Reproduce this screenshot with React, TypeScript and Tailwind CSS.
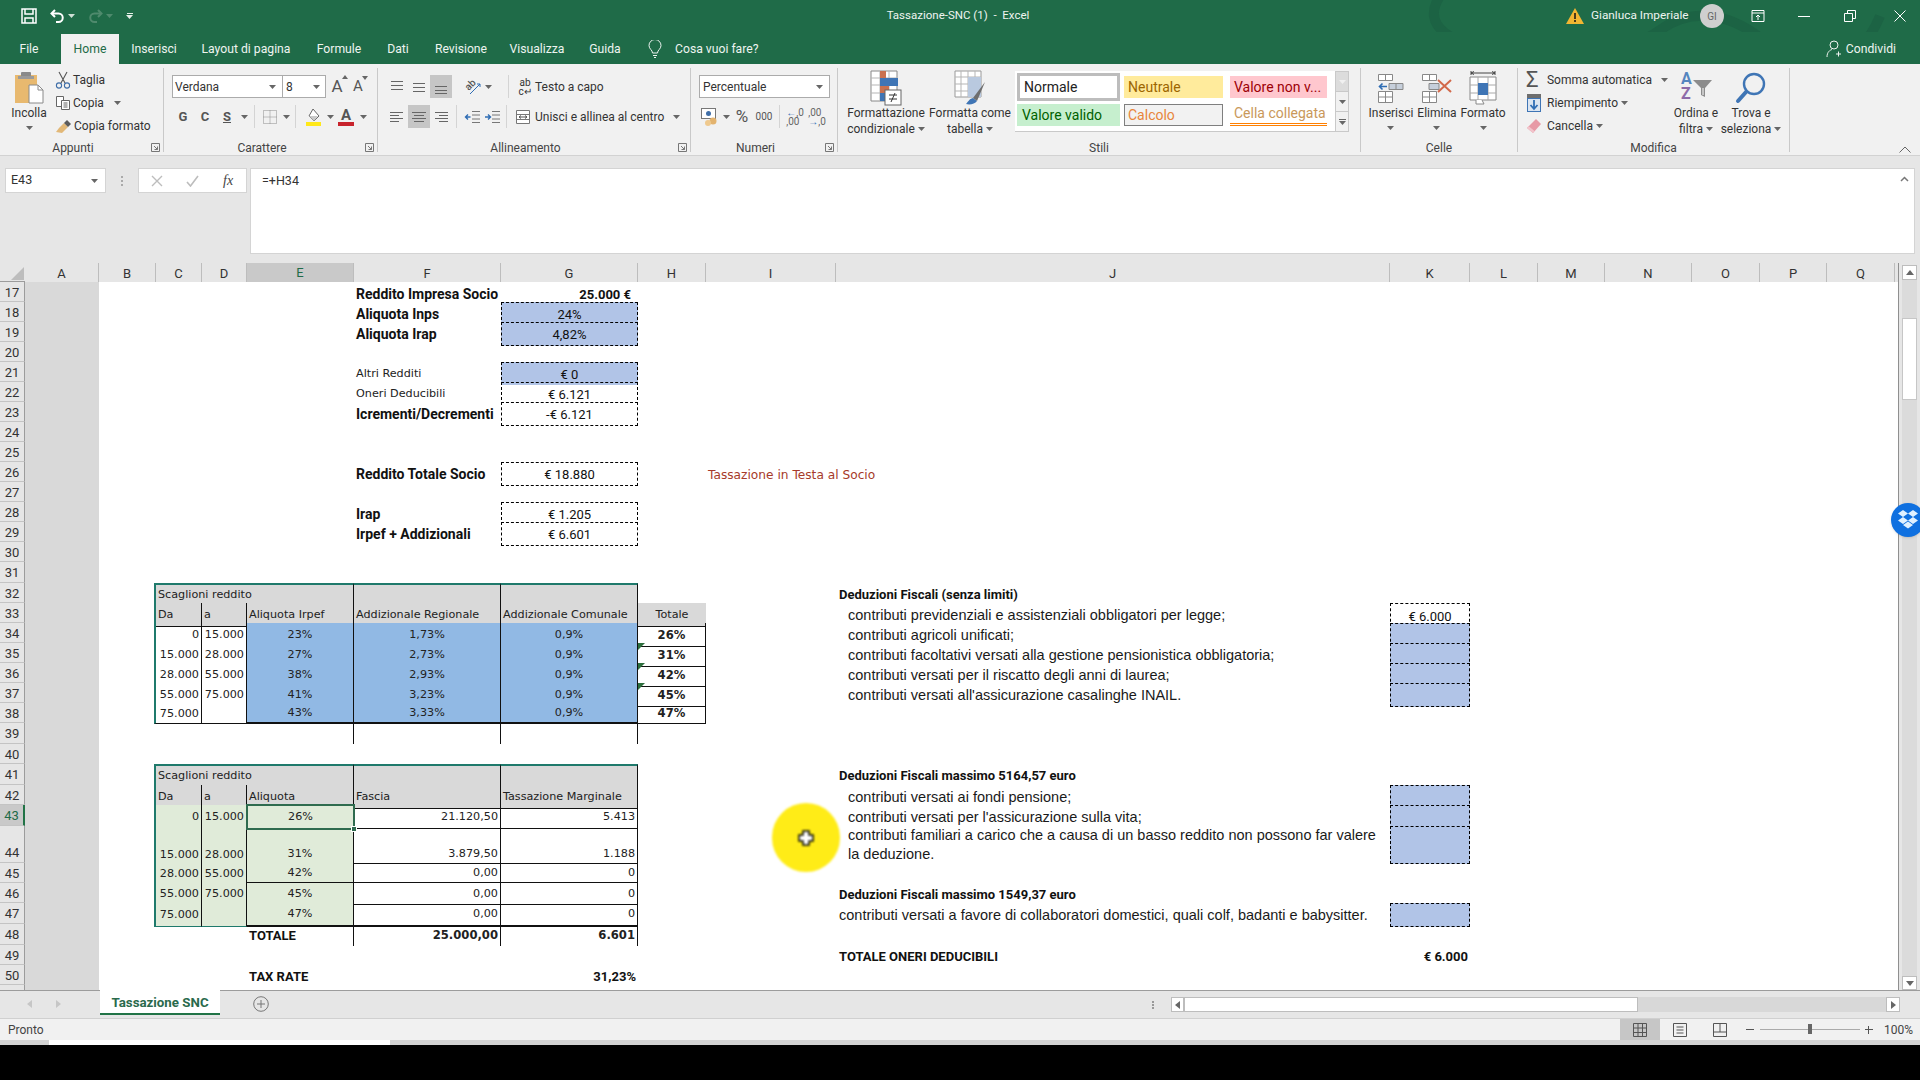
import React from "react";

const UI = 'font-["Roboto",sans-serif]';
const CAL = 'font-["Roboto",sans-serif] text-[13px] text-[#111]';
const CALB = 'font-["Roboto",sans-serif] text-[13px] font-bold text-[#111]';
const CALL = 'font-["Roboto",sans-serif] text-[14px] font-bold text-[#111]';
const VD = 'font-["DejaVu_Sans",sans-serif] text-[11.2px] text-[#222]';
const VDB = 'font-["DejaVu_Sans",sans-serif] text-[11.6px] font-bold text-[#222]';
const AR = 'font-["Liberation_Sans",sans-serif] text-[14.5px] text-[#1a1a1a]';

const COLS =
  "grid-cols-[74px_57px_46px_45px_107px_147px_137px_68px_130px_554px_80px_68px_67px_87px_68px_67px_68px_3px]";

const Caret = ({ c = "#666" }: { c?: string }) => (
  <svg width="7" height="4" viewBox="0 0 7 4">
    <path d="M0 0h7L3.5 4z" fill={c} />
  </svg>
);

const Lines = ({ rows }: { rows: [number, number, number][] }) => (
  <svg width="16" height="16" viewBox="0 0 16 16" stroke="#666" strokeWidth="1">
    {rows.map(([y, a, b]) => (
      <path key={y} d={`M${a} ${y}.5H${b}`} />
    ))}
  </svg>
);

const SaveIcon = () => (
  <svg width="16" height="16" viewBox="0 0 16 16" fill="none" stroke="#fff" strokeWidth="1.5">
    <path d="M1 1h14v14H1z" />
    <path d="M4 1v5h8V1M4 15v-5h8v5" />
  </svg>
);

const UndoIcon = ({ c }: { c: string }) => (
  <svg width="15" height="15" viewBox="0 0 15 15" fill="none" stroke={c} strokeWidth="2">
    <path d="M5 1 1.5 4.5 5 8" />
    <path d="M2 4.5h6.5a4 4 0 0 1 0 8.5H6" />
  </svg>
);

const PasteIcon = () => (
  <svg width="30" height="34" viewBox="0 0 30 34">
    <rect x="1" y="4" width="22" height="28" fill="#e8b96f" />
    <rect x="7" y="1" width="10" height="6" rx="1" fill="#8a8a8a" />
    <rect x="4" y="5" width="16" height="3" fill="#9a9a9a" />
    <path d="M15 14h9l5 5v13H15z" fill="#fff" stroke="#8a8a8a" />
    <path d="M24 14v5h5" fill="none" stroke="#8a8a8a" />
  </svg>
);

const ScissorsIcon = () => (
  <svg width="16" height="18" viewBox="0 0 16 18" fill="none" stroke="#555" strokeWidth="1.1">
    <path d="M4 1l6 11M12 1 6 12" />
    <circle cx="4" cy="14.5" r="2.6" stroke="#3f6ea8" />
    <circle cx="12" cy="14.5" r="2.6" stroke="#3f6ea8" />
  </svg>
);

const CopyIcon = () => (
  <svg width="16" height="16" viewBox="0 0 16 16" fill="#fff" stroke="#666">
    <path d="M1.5 1.5h7v10h-7z" />
    <path d="M6.5 5.5h8v9h-8z" />
    <path d="M8.5 8h4M8.5 10h4M8.5 12h4" />
  </svg>
);

const BrushIcon = () => (
  <svg width="18" height="16" viewBox="0 0 18 16">
    <path d="M9 5 13 9 7 15 1 14 4 10z" fill="#e2b877" />
    <path d="M9 5l3-3 4 4-3 3z" fill="#5a5a5a" />
  </svg>
);

const FontA = ({ up }: { up: boolean }) => (
  <span className={`${UI} relative text-[#555] ${up ? "text-[17px]" : "text-[15px]"} leading-none`}>
    A
    <svg className="absolute -top-[3px] -right-[5px]" width="6" height="4" viewBox="0 0 6 4">
      <path d={up ? "M0 4h6L3 0z" : "M0 0h6L3 4z"} fill="#666" />
    </svg>
  </span>
);

const BorderIcon = () => (
  <svg width="16" height="16" viewBox="0 0 16 16" fill="none" stroke="#8c8c8c" strokeDasharray="1 1">
    <path d="M1.5 1.5h13v13h-13zM8 1.5v13M1.5 8h13" />
  </svg>
);

const FillIcon = () => (
  <svg width="18" height="18" viewBox="0 0 18 18">
    <path d="M8 1l6 7-5 5-5-5z" fill="#fff" stroke="#666" />
    <path d="M4 8h9l-4 5z" fill="#c9c9c9" />
    <rect x="1" y="14" width="15" height="4" fill="#ffe81a" />
  </svg>
);

const ColorIcon = () => (
  <div className="flex flex-col items-center">
    <span className={`${UI} text-[15px] font-bold leading-[14px] text-[#555]`}>A</span>
    <span className="h-[4px] w-[16px] bg-[#c8232c]" />
  </div>
);

const Orient = () => (
  <div className="relative h-[18px] w-[18px]">
    <span className={`${UI} absolute left-[1px] top-[1px] -rotate-45 text-[10px] font-medium leading-[12px] text-[#555]`}>ab</span>
    <svg className="absolute left-0 top-0" width="18" height="18" viewBox="0 0 18 18" fill="none" stroke="#2f6db4">
      <path d="M6 16 16 6M16 6h-3M16 6v3" />
    </svg>
  </div>
);

const Indent = ({ right }: { right: boolean }) => (
  <svg width="16" height="14" viewBox="0 0 16 14" fill="none" stroke="#777">
    <path d="M8 1.5h8M8 5h8M8 9h8M8 12.5h8" />
    <path d={right ? "M1 7h5M4 4.5 6.5 7 4 9.5" : "M6.5 7h-5M4 4.5 1.5 7 4 9.5"} stroke="#2f6db4" strokeWidth="1.4" />
  </svg>
);

const MergeIcon = () => (
  <svg width="16" height="16" viewBox="0 0 16 16" fill="#fff" stroke="#777">
    <path d="M1.5 1.5h13v13h-13zM1.5 5.5h13M1.5 10.5h13" />
    <path d="M4 8h8M4 8l2-1.5M4 8l2 1.5M12 8l-2-1.5M12 8l-2 1.5" stroke="#555" />
  </svg>
);

const MoneyIcon = () => (
  <svg width="18" height="18" viewBox="0 0 18 18">
    <rect x="0.5" y="0.5" width="14" height="10" fill="#fff" stroke="#777" />
    <circle cx="7.5" cy="5.5" r="2.5" fill="#3f6ea8" />
    <circle cx="12" cy="13" r="3.5" fill="#e3b36e" />
    <circle cx="7" cy="15" r="3" fill="#efc98e" />
  </svg>
);

const CondIcon = () => (
  <svg width="32" height="36" viewBox="0 0 32 36">
    <path d="M1 1h26v30H1z" fill="#fff" stroke="#888" />
    <path d="M10 1v30M19 1v30M1 8h26M1 15h26M1 23h26" stroke="#b5b5b5" fill="none" />
    <rect x="10" y="1" width="6" height="7" fill="#c9714f" />
    <rect x="10" y="8" width="18" height="8" fill="#3f75b5" />
    <rect x="10" y="16" width="9" height="7" fill="#c9714f" />
    <rect x="10" y="23" width="5" height="8" fill="#3f75b5" />
    <rect x="15" y="20" width="16" height="15" fill="#fff" stroke="#666" />
    <path d="M19 25h8M19 29h8M25 23l-4 9" stroke="#333" fill="none" />
  </svg>
);

const TableIcon = () => (
  <svg width="32" height="36" viewBox="0 0 32 36">
    <path d="M1 1h26v26H1z" fill="#fff" stroke="#999" />
    <path d="M7 1v26M14 1v26M21 1v26M1 7h26M1 14h26M1 21h26" stroke="#b5b5b5" fill="none" />
    <rect x="14" y="7" width="13" height="20" fill="#b9c9df" />
    <path d="M31 12 19 28l4 3z" fill="#6e6e6e" />
    <path d="M19 28c-4 1-5 4-7 6 4 1 9 0 11-3z" fill="#3f75b5" />
  </svg>
);

const InsertIcon = () => (
  <svg width="28" height="30" viewBox="0 0 28 30" fill="#fff" stroke="#888">
    <path d="M1.5 1.5h14v6h-14zM8.5 1.5v6M1.5 18.5h14v11h-14zM8.5 18.5v11M1.5 24h14" />
    <path d="M12 10.5h14v6H12zM19 10.5v6" fill="#c6cfdb" />
    <path d="M10 13.5H3M5.5 10.5l-3 3 3 3" stroke="#2f6db4" strokeWidth="1.6" fill="none" />
  </svg>
);

const DeleteIcon = () => (
  <svg width="32" height="30" viewBox="0 0 32 30" fill="#fff" stroke="#888">
    <path d="M1.5 1.5h14v6h-14zM8.5 1.5v6M1.5 18.5h14v11h-14zM8.5 18.5v11M1.5 24h14" />
    <path d="M8 10.5h10v6H8z" fill="#c6cfdb" />
    <path d="M17 7l13 12M30 7 17 19" stroke="#d2694a" strokeWidth="2" />
  </svg>
);

const FormatIcon = () => (
  <svg width="30" height="34" viewBox="0 0 30 34" fill="none" stroke="#888">
    <path d="M2 6h26v23H2z" fill="#fff" />
    <path d="M10 6v23M20 6v23M2 14h26M2 22h26" stroke="#aaa" />
    <rect x="10" y="12" width="10" height="12" fill="#3f75b5" stroke="none" />
    <path d="M3 2h24M3 0v4M27 0v4M3 2l3-1.5M3 2l3 1.5M27 2l-3-1.5M27 2l-3 1.5" stroke="#444" />
    <path d="M8 29v4h8l-2-4" fill="#fff" />
  </svg>
);

const FillDown = () => (
  <svg width="16" height="20" viewBox="0 0 16 20">
    <rect x="1" y="1" width="14" height="4" fill="#6e6e6e" />
    <rect x="1.5" y="5.5" width="13" height="13" fill="#dbe5f1" stroke="#3f75b5" />
    <path d="M8 7v9M4.5 12 8 16l3.500-4" fill="none" stroke="#2f6db4" strokeWidth="1.8" />
  </svg>
);

const Eraser = () => (
  <svg width="16" height="16" viewBox="0 0 16 16">
    <path d="M10 1l5 5-8 9-6-5z" fill="#e79aa6" />
    <path d="M1 10l6 5 1.500-2-6-5z" fill="#f2c4cb" />
  </svg>
);

const SortIcon = () => (
  <div className="relative h-[32px] w-[34px]">
    <span className={`${UI} absolute left-[2px] -top-[1px] text-[16px] font-bold leading-[16px] text-[#5585bf]`}>A</span>
    <span className={`${UI} absolute left-[2px] top-[14px] text-[16px] font-bold leading-[16px] text-[#8e6aa8]`}>Z</span>
    <svg className="absolute left-[14px] top-[7px]" width="20" height="20" viewBox="0 0 20 20">
      <path d="M0 1h19l-7 8v9l-4-2V9z" fill="#8c8c8c" />
      <path d="M10 9v7" stroke="#fff" />
    </svg>
  </div>
);

const Magnifier = () => (
  <svg width="32" height="34" viewBox="0 0 32 34" fill="none">
    <circle cx="19" cy="13" r="10" stroke="#3f75b5" strokeWidth="2.4" />
    <path d="M11 21 3 30" stroke="#3f75b5" strokeWidth="4" strokeLinecap="round" />
  </svg>
);

function BigBtn({ w, icon, lines, arrow }: { w: string; icon: React.ReactNode; lines: string[]; arrow?: boolean }) {
  return (
    <div className={`${w} flex flex-col items-center pt-[4px]`}>
      <div className="flex h-[32px] items-center justify-center">{icon}</div>
      <div className="mt-[1px] flex flex-col items-center whitespace-nowrap leading-[16px]">
        {lines.map((l, i) => (
          <span key={l} className="flex items-center gap-[3px]">
            {l}
            {arrow && lines.length > 1 && i === lines.length - 1 && <Caret />}
          </span>
        ))}
        {arrow && lines.length === 1 && (
          <span className="flex h-[14px] items-center">
            <Caret />
          </span>
        )}
      </div>
    </div>
  );
}

function Group({ w, label, launcher, children }: { w: string; label: string; launcher?: boolean; children: React.ReactNode }) {
  return (
    <div className={`${w} relative flex h-[84px] shrink-0 flex-col border-r border-[#c9c9c9]`}>
      <div className="flex h-[73px] shrink-0">{children}</div>
      <div className={`h-[11px] text-center text-[12px] leading-[14px] text-[#444] ${launcher ? "pr-[17px]" : ""}`}>{label}</div>
      {launcher && (
        <svg className="absolute right-[3px] top-[75px]" width="9" height="9" viewBox="0 0 9 9" fill="none" stroke="#777">
          <path d="M.5.5h8v8h-8zM3 3l3.500 3.500M3.500 6.500H6.500V3.500" />
        </svg>
      )}
    </div>
  );
}

const Slot = ({ w = "w-[22px]", active, children }: { w?: string; active?: boolean; children: React.ReactNode }) => (
  <div className={`${w} flex h-[23px] shrink-0 items-center justify-center ${active ? "bg-[#c6c6c6]" : ""}`}>{children}</div>
);

const Sep = () => <div className="mx-[4px] h-[23px] w-px shrink-0 bg-[#d4d4d4]" />;

function TitleBar() {
  return (
    <div className="relative flex h-[32px] items-center bg-[#1f6b48] text-[#eef4f0]">
      <svg className="absolute right-0 top-0" width="520" height="64" viewBox="0 0 520 64" fill="none" stroke="#1c6344" strokeWidth="10">
        <path d="M40 -4c-20 30 10 50 70 56s120 0 150-22 70-20 110 16 90 20 110-30" />
      </svg>
      <div className="relative flex w-[351px] items-center">
        <div className="ml-[21px] w-[16px]">
          <SaveIcon />
        </div>
        <div className="ml-[13px] flex items-center gap-[3px]">
          <UndoIcon c="#ffffff" />
          <Caret c="#cfe0d6" />
        </div>
        <div className="ml-[13px] flex items-center gap-[3px]">
          <UndoIconFlip />
          <Caret c="#4f8a6d" />
        </div>
        <div className="ml-[13px] flex flex-col items-center gap-[1px]">
          <span className="h-px w-[6px] bg-[#e6efe9]" />
          <Caret c="#e6efe9" />
        </div>
      </div>
      <div className={`${UI} relative flex-1 whitespace-pre text-center text-[11.5px]`}>Tassazione-SNC (1)  -  Excel</div>
      <div className={`${UI} relative flex w-[355px] items-center text-[11.8px]`}>
        <svg className="ml-[1px]" width="18" height="16" viewBox="0 0 18 16">
          <path d="M9 0l9 16H0z" fill="#f2b632" />
          <path d="M8 5h2v6H8zM8 12h2v2H8z" fill="#4a3b1a" />
        </svg>
        <span className="ml-[7px] w-[109px] whitespace-nowrap">Gianluca Imperiale</span>
        <span className="flex h-[24px] w-[24px] items-center justify-center rounded-full bg-[#cfcfcf] text-[10px] text-[#666]">GI</span>
        <svg className="ml-[24px]" width="20" height="14" viewBox="0 0 20 14" fill="none" stroke="#fff">
          <path d="M4 1.500h12v11H4zM4 4h12M10 11V6M8 8l2-2 2 2" />
        </svg>
        <span className="ml-[30px] h-px w-[12px] bg-white" />
        <svg className="ml-[34px]" width="12" height="12" viewBox="0 0 12 12" fill="none" stroke="#fff">
          <path d="M.5 3.500h8v8h-8zM3.500 3V.5h8v8H9" />
        </svg>
        <svg className="ml-[38px]" width="12" height="12" viewBox="0 0 12 12" stroke="#fff">
          <path d="M.5.5l11 11M11.500.5l-11 11" />
        </svg>
      </div>
    </div>
  );
}

const UndoIconFlip = () => (
  <svg width="15" height="15" viewBox="0 0 15 15" fill="none" stroke="#4f8a6d" strokeWidth="2">
    <path d="M10 1l3.500 3.500L10 8" />
    <path d="M13 4.500H6.500a4 4 0 0 0 0 8.500H9" />
  </svg>
);

function TabBar() {
  const tabs: [string, string][] = [
    ["File", "w-[61px] pr-[3px]"],
    ["Home", "w-[58px]"],
    ["Inserisci", "w-[70px]"],
    ["Layout di pagina", "w-[114px]"],
    ["Formule", "w-[72px]"],
    ["Dati", "w-[46px]"],
    ["Revisione", "w-[80px]"],
    ["Visualizza", "w-[72px]"],
    ["Guida", "w-[64px]"],
  ];
  return (
    <div className={`${UI} relative flex h-[32px] items-end bg-[#1f6b48] text-[12.2px] text-[#eef4f0]`}>
      {tabs.map(([t, w]) => (
        <div
          key={t}
          className={`${w} flex h-[30px] items-center justify-center ${t === "Home" ? "bg-[#f1f1f1] text-[#1f6b48]" : ""}`}
        >
          {t}
        </div>
      ))}
      <div className="flex h-[30px] items-center">
        <svg className="ml-[11px]" width="14" height="18" viewBox="0 0 14 18" fill="none" stroke="#eef4f0">
          <path d="M4.500 13c0-3-3.500-4-3.500-7.500a6 6 0 0 1 12 0C13 9 9.500 10 9.500 13zM5 15.500h4M6 17.500h2" />
        </svg>
        <span className="ml-[13px]">Cosa vuoi fare?</span>
      </div>
      <div className="ml-auto mr-[24px] flex h-[30px] items-center gap-[4px]">
        <svg width="16" height="18" viewBox="0 0 16 18" fill="none" stroke="#eef4f0">
          <circle cx="8" cy="5" r="4" />
          <path d="M1 17c0-5 3-7 5-7.500M9 10v0M10 14h5M12.500 11.500v5" />
        </svg>
        <span>Condividi</span>
      </div>
    </div>
  );
}

function Ribbon() {
  return (
    <div className={`${UI} flex h-[92px] border-b border-[#d2d2d2] bg-[#f1f1f1] pt-[4px] text-[12px] text-[#333]`}>
      <Group w="w-[164px]" label="Appunti" launcher>
        <div className="flex w-[55px] flex-col items-center pl-[3px] pt-[3px]">
          <PasteIcon />
          <span className="mt-[1px] leading-[14px]">Incolla</span>
          <span className="mt-[6px]">
            <Caret />
          </span>
        </div>
        <div className="flex flex-col">
          <div className="flex h-[23px] items-center gap-[2px]"><ScissorsIcon /> Taglia</div>
          <div className="flex h-[23px] items-center gap-[2px]"><CopyIcon /> Copia <span className="ml-[8px]"><Caret /></span></div>
          <div className="flex h-[23px] items-center whitespace-nowrap gap-[1px]"><BrushIcon /> Copia formato</div>
        </div>
      </Group>

      <Group w="w-[214px]" label="Carattere" launcher>
        <div className="flex flex-col pl-[8px] pt-[7px]">
          <div className="flex h-[23px] items-center">
            <div className="flex h-[23px] w-[111px] items-center justify-between border border-[#ababab] bg-white pl-[2px] pr-[6px] text-[#333]">
              Verdana <Caret />
            </div>
            <div className="-ml-px flex h-[23px] w-[44px] items-center justify-between border border-[#ababab] bg-white pl-[3px] pr-[5px]">
              8 <Caret />
            </div>
            <Slot><FontA up /></Slot>
            <Slot w="w-[20px]"><FontA up={false} /></Slot>
          </div>
          <div className="mt-[7px] flex h-[23px] items-center text-[#555]">
            <Slot><span className="text-[13px] font-bold">G</span></Slot>
            <Slot><span className="text-[13px] font-bold">C</span></Slot>
            <Slot><span className="text-[13px] font-bold underline">S</span></Slot>
            <Slot w="w-[12px]"><Caret /></Slot>
            <Sep />
            <Slot><BorderIcon /></Slot>
            <Slot w="w-[10px]"><Caret /></Slot>
            <Sep />
            <div className="w-[3px]" />
            <Slot><FillIcon /></Slot>
            <Slot w="w-[10px]"><Caret /></Slot>
            <Slot><ColorIcon /></Slot>
            <Slot w="w-[12px]"><Caret /></Slot>
          </div>
        </div>
      </Group>

      <Group w="w-[313px]" label="Allineamento" launcher>
        <div className="flex flex-col pl-[8px] pt-[7px]">
          <div className="flex h-[23px] items-center">
            <Slot><Lines rows={[[2, 2, 14], [6, 2, 14], [10, 2, 14]]} /></Slot>
            <Slot><Lines rows={[[4, 2, 14], [8, 2, 14], [12, 2, 14]]} /></Slot>
            <Slot active><Lines rows={[[7, 2, 14], [11, 2, 14], [14, 2, 14]]} /></Slot>
            <div className="w-[10px]" />
            <Slot><Orient /></Slot>
            <Slot w="w-[8px]"><Caret /></Slot>
            <div className="w-[12px]" />
            <Sep />
            <div className="ml-[2px] flex h-[23px] w-[20px] flex-col items-center justify-center text-[10px] leading-[9px]">
              <span>ab</span>
              <span>c↵</span>
            </div>
            <span className="whitespace-nowrap">Testo a capo</span>
          </div>
          <div className="mt-[7px] flex h-[23px] items-center">
            <Slot><Lines rows={[[3, 1, 14], [6, 1, 10], [9, 1, 14], [12, 1, 10]]} /></Slot>
            <Slot active><Lines rows={[[3, 1, 15], [6, 3, 13], [9, 1, 15], [12, 3, 13]]} /></Slot>
            <Slot><Lines rows={[[3, 2, 15], [6, 6, 15], [9, 2, 15], [12, 6, 15]]} /></Slot>
            <Sep />
            <div className="w-[1px]" />
            <Slot w="w-[20px]"><Indent right={false} /></Slot>
            <Slot w="w-[20px]"><Indent right /></Slot>
            <Sep />
            <Slot w="w-[24px]"><MergeIcon /></Slot>
            <span className="whitespace-nowrap">Unisci e allinea al centro</span>
            <span className="ml-[9px]"><Caret /></span>
          </div>
        </div>
      </Group>

      <Group w="w-[147px]" label="Numeri" launcher>
        <div className="flex flex-col pl-[8px] pt-[7px]">
          <div className="flex h-[23px] w-[131px] items-center justify-between border border-[#ababab] bg-white pl-[3px] pr-[6px]">
            Percentuale <Caret />
          </div>
          <div className="mt-[7px] flex h-[23px] items-center text-[#555]">
            <Slot><MoneyIcon /></Slot>
            <Slot w="w-[10px]"><Caret /></Slot>
            <Slot><span className="text-[17px]">%</span></Slot>
            <Slot><span className="text-[10px]">000</span></Slot>
            <Sep />
            <Slot><span className="text-[10px] leading-[9px] text-[#666]"><span className="text-[#2f6db4]">←</span>,0<br />,00</span></Slot>
            <Slot><span className="text-[10px] leading-[9px] text-[#666]">,00<br /><span className="text-[#2f6db4]">→</span>,0</span></Slot>
          </div>
        </div>
      </Group>

      <Group w="w-[523px]" label="Stili">
        <BigBtn w="w-[96px]" icon={<CondIcon />} lines={["Formattazione", "condizionale"]} arrow />
        <BigBtn w="w-[72px]" icon={<TableIcon />} lines={["Formatta come", "tabella"]} arrow />
        <div className="ml-[9px] mt-[3px] flex h-[61px]">
          <div className="w-[320px] border-b border-[#c9c9c9] bg-white pl-[2px] pt-[2px] text-[14px]">
            <div className="grid grid-cols-[103px_99px_100px] gap-x-[4px] gap-y-[3px]">
              <div className="flex h-[28px] items-center border-[3px] border-[#bdbdbd] bg-white pl-[4px] text-[#222]">Normale</div>
              <div className="my-[3px] flex h-[22px] items-center bg-[#ffeb9c] pl-[4px] text-[#9c6500]">Neutrale</div>
              <div className="my-[3px] ml-[3px] flex h-[22px] items-center bg-[#ffc7ce] pl-[4px] text-[#9c0006]">Valore non v...</div>
              <div className="flex h-[22px] items-center bg-[#c6efce] pl-[5px] text-[#006100]">Valore valido</div>
              <div className="flex h-[22px] items-center border border-[#7f7f7f] bg-[#f2f2f2] pl-[3px] text-[#e8853a]">Calcolo</div>
              <div className="ml-[3px] flex h-[22px] items-center border-b-[3px] border-double border-[#ff8001] pl-[4px] text-[#c9985a]">Cella collegata</div>
            </div>
          </div>
          <div className="flex w-[14px] flex-col border border-[#c9c9c9]">
            <div className="flex h-[20px] items-center justify-center border-b border-[#c9c9c9] bg-[#dcdcdc]"><Caret c="#f1f1f1" /></div>
            <div className="flex h-[20px] items-center justify-center border-b border-[#c9c9c9]"><Caret /></div>
            <div className="flex flex-1 flex-col items-center justify-center gap-[1px]"><span className="h-px w-[7px] bg-[#666]" /><Caret /></div>
          </div>
        </div>
      </Group>

      <Group w="w-[157px]" label="Celle">
        <div className="flex pl-[7px]">
          <BigBtn w="w-[46px]" icon={<InsertIcon />} lines={["Inserisci"]} arrow />
          <BigBtn w="w-[46px]" icon={<DeleteIcon />} lines={["Elimina"]} arrow />
          <BigBtn w="w-[46px]" icon={<FormatIcon />} lines={["Formato"]} arrow />
        </div>
      </Group>

      <Group w="w-[272px]" label="Modifica">
        <div className="flex w-[150px] flex-col pl-[8px]">
          <div className="flex h-[23px] items-center whitespace-nowrap">
            <span className="w-[21px] text-[22px] leading-none text-[#555]">Σ</span>
            Somma automatica <span className="ml-[9px]"><Caret /></span>
          </div>
          <div className="flex h-[23px] items-center">
            <span className="w-[21px]"><FillDown /></span>
            Riempimento <span className="ml-[3px]"><Caret /></span>
          </div>
          <div className="flex h-[23px] items-center">
            <span className="w-[21px]"><Eraser /></span>
            Cancella <span className="ml-[3px]"><Caret /></span>
          </div>
        </div>
        <BigBtn w="w-[56px]" icon={<SortIcon />} lines={["Ordina e", "filtra"]} arrow />
        <BigBtn w="w-[54px]" icon={<Magnifier />} lines={["Trova e", "seleziona"]} arrow />
      </Group>

      <div className="ml-auto mr-[9px] mt-[78px]">
        <svg width="12" height="7" viewBox="0 0 12 7" fill="none" stroke="#666">
          <path d="M.5 6.500 6 1l5.500 5.500" />
        </svg>
      </div>
    </div>
  );
}

function FormulaBar() {
  return (
    <div className={`${UI} flex h-[107px] bg-[#e6e6e6] pl-[5px] pt-[12px] text-[12.5px] text-[#333]`}>
      <div className="flex h-[25px] w-[101px] items-center justify-between border border-[#d4d4d4] bg-white pl-[5px] pr-[7px]">
        E43 <Caret />
      </div>
      <div className="flex h-[25px] w-[32px] flex-col items-center justify-center gap-[2px]">
        <span className="h-[2px] w-[2px] bg-[#aaa]" />
        <span className="h-[2px] w-[2px] bg-[#aaa]" />
        <span className="h-[2px] w-[2px] bg-[#aaa]" />
      </div>
      <div className="flex h-[25px] w-[109px] items-center border border-[#d4d4d4] bg-white">
        <svg className="ml-[12px]" width="12" height="12" viewBox="0 0 12 12" stroke="#bdbdbd" strokeWidth="1.400">
          <path d="M1 1l10 10M11 1 1 11" />
        </svg>
        <svg className="ml-[23px]" width="13" height="12" viewBox="0 0 13 12" fill="none" stroke="#bdbdbd" strokeWidth="1.600">
          <path d="M1 7l3.500 4L12 1" />
        </svg>
        <span className='ml-[24px] font-["Liberation_Serif",serif] text-[14px] italic text-[#444]'>fx</span>
      </div>
      <div className="ml-[3px] flex h-[86px] w-[1665px] justify-between border border-[#d4d4d4] bg-white pl-[11px] pr-[5px] pt-[3px]">
        <span>=+H34</span>
        <svg className="mt-[4px]" width="9" height="6" viewBox="0 0 9 6" fill="none" stroke="#777" strokeWidth="1.500">
          <path d="M1 5l3.500-3.500L8 5" />
        </svg>
      </div>
    </div>
  );
}

function ColumnHeader() {
  const cols = ["A", "B", "C", "D", "E", "F", "G", "H", "I", "J", "K", "L", "M", "N", "O", "P", "Q"];
  return (
    <div className={`${UI} flex h-[19px] bg-[#e6e6e6] text-[13px] text-[#333]`}>
      <div className="flex w-[25px] shrink-0 items-end justify-end border-b border-[#9c9c9c] border-r-[#b5b5b5]">
        <svg width="15" height="15" viewBox="0 0 15 15">
          <path d="M14 1v13H1z" fill="#bdbdbd" />
        </svg>
      </div>
      <div className={`grid flex-1 ${COLS}`}>
        {cols.map((c) => (
          <div
            key={c}
            className={`flex items-center justify-center border-r border-[#bdbdbd] ${
              c === "E" ? "border-b-2 border-b-[#217346] bg-[#c9c9c9] text-[#1f6b48]" : "border-b border-b-[#9c9c9c]"
            }`}
          >
            {c}
          </div>
        ))}
      </div>
    </div>
  );
}

type RowProps = { n?: number; h?: string; end?: boolean; active?: boolean; children?: React.ReactNode };

function Row({ n, h = "h-[20px]", end, active, children }: RowProps) {
  return (
    <div className={`flex ${h} shrink-0`}>
      <div
        className={`${UI} flex w-[25px] shrink-0 justify-center border-b border-b-[#c4c4c4] text-[13px] ${
          active ? "border-r-2 border-r-[#217346] bg-[#c9c9c9] text-[#1f6b48]" : "border-r border-r-[#9c9c9c] bg-[#e6e6e6] text-[#333]"
        } ${end ? "items-end" : "items-center pt-[2px]"}`}
      >
        {n}
      </div>
      <div className={`grid flex-1 ${COLS} bg-white`}>
        <div className="col-start-1 bg-[#d9d9d9]" />
        {children}
      </div>
    </div>
  );
}

const Cell = ({ at, className = "", children }: { at: string; className?: string; children?: React.ReactNode }) => (
  <div className={`${at} relative flex min-w-0 items-center whitespace-nowrap px-[2px] pt-[2px] ${className}`}>{children}</div>
);

const TEAL_L = "-ml-[2px] border-l-2 border-l-[#1f7a6c]";
const TEAL_T = "border-t-2 border-t-[#1f7a6c]";
const RB = "border-r border-b border-[#111]";
const HEAD = "bg-[#d9d9d9]";
const BLUE = "justify-center bg-[#91b9e4]";
const GREEN = "bg-[#e0ebd9]";
const DASH = "justify-center border-x border-t border-dashed border-black";
const LIGHT = "bg-[#b1c4e7]";

const Corner = () => (
  <svg className="absolute left-0 top-0" width="7" height="7" viewBox="0 0 7 7">
    <path d="M0 0h7L0 7z" fill="#2c6e3c" />
  </svg>
);

const table1: [string, string, string, string, string, string, boolean][] = [
  ["0", "15.000", "23%", "1,73%", "0,9%", "26%", false],
  ["15.000", "28.000", "27%", "2,73%", "0,9%", "31%", true],
  ["28.000", "55.000", "38%", "2,93%", "0,9%", "42%", true],
  ["55.000", "75.000", "41%", "3,23%", "0,9%", "45%", true],
  ["75.000", "", "43%", "3,33%", "0,9%", "47%", false],
];

const J = ({ children }: { children: React.ReactNode }) => (
  <Cell at="col-start-10" className={`${AR} pl-[12px]`}>{children}</Cell>
);
const JH = ({ children }: { children: React.ReactNode }) => (
  <Cell at="col-start-10" className={`${CALB} pl-[3px]`}>{children}</Cell>
);
const K = ({ end, white, children }: { end?: boolean; white?: boolean; children?: React.ReactNode }) => (
  <Cell at="col-start-11" className={`${CAL} ${DASH} ${end ? "border-b" : ""} ${white ? "" : LIGHT}`}>{children}</Cell>
);

function Sheet() {
  return (
    <div className="relative flex-1 overflow-hidden">
      <ColumnHeader />
      <Row n={17}>
        <Cell at="col-start-6" className={CALL}>Reddito Impresa Socio</Cell>
        <Cell at="col-start-7" className={`${CALB} justify-end pr-[7px]`}>25.000 €</Cell>
      </Row>
      <Row n={18}>
        <Cell at="col-start-6" className={CALL}>Aliquota Inps</Cell>
        <Cell at="col-start-7" className={`${CAL} ${DASH} ${LIGHT}`}>24%</Cell>
      </Row>
      <Row n={19}>
        <Cell at="col-start-6" className={CALL}>Aliquota Irap</Cell>
        <Cell at="col-start-7" className={`${CAL} ${DASH} ${LIGHT} border-b`}>4,82%</Cell>
      </Row>
      <Row n={20} />
      <Row n={21}>
        <Cell at="col-start-6" className={VD}>Altri Redditi</Cell>
        <Cell at="col-start-7" className={`${CAL} ${DASH} ${LIGHT}`}>€ 0</Cell>
      </Row>
      <Row n={22}>
        <Cell at="col-start-6" className={VD}>Oneri Deducibili</Cell>
        <Cell at="col-start-7" className={`${CAL} ${DASH}`}>€ 6.121</Cell>
      </Row>
      <Row n={23}>
        <Cell at="col-start-6" className={CALL}>Icrementi/Decrementi</Cell>
        <Cell at="col-start-7" className={`${CAL} ${DASH} border-b`}>-€ 6.121</Cell>
      </Row>
      <Row n={24} />
      <Row n={25} />
      <Row n={26}>
        <Cell at="col-start-6" className={CALL}>Reddito Totale Socio</Cell>
        <Cell at="col-start-7" className={`${CAL} ${DASH} border-b`}>€ 18.880</Cell>
        <Cell at="col-start-9" className='font-["DejaVu_Sans",sans-serif] text-[12.2px] text-[#a63a2a]'>Tassazione in Testa al Socio</Cell>
      </Row>
      <Row n={27} />
      <Row n={28}>
        <Cell at="col-start-6" className={CALL}>Irap</Cell>
        <Cell at="col-start-7" className={`${CAL} ${DASH}`}>€ 1.205</Cell>
      </Row>
      <Row n={29}>
        <Cell at="col-start-6" className={CALL}>Irpef + Addizionali</Cell>
        <Cell at="col-start-7" className={`${CAL} ${DASH} border-b`}>€ 6.601</Cell>
      </Row>
      <Row n={30} />
      <Row n={31} h="h-[21px]" />

      <Row n={32}>
        <Cell at="col-start-3 col-span-3" className={`${VD} ${HEAD} ${RB} ${TEAL_L} ${TEAL_T}`}>Scaglioni reddito</Cell>
        <Cell at="col-start-6" className={`${HEAD} ${RB} ${TEAL_T}`} />
        <Cell at="col-start-7" className={`${HEAD} ${RB} ${TEAL_T}`} />
        <JH>Deduzioni Fiscali (senza limiti)</JH>
      </Row>
      <Row n={33}>
        <Cell at="col-start-3" className={`${VD} ${HEAD} ${RB} ${TEAL_L}`}>Da</Cell>
        <Cell at="col-start-4" className={`${VD} ${HEAD} ${RB}`}>a</Cell>
        <Cell at="col-start-5" className={`${VD} ${HEAD} ${RB}`}>Aliquota Irpef</Cell>
        <Cell at="col-start-6" className={`${VD} ${HEAD} ${RB}`}>Addizionale Regionale</Cell>
        <Cell at="col-start-7" className={`${VD} ${HEAD} ${RB}`}>Addizionale Comunale</Cell>
        <Cell at="col-start-8" className={`${VD} ${HEAD} justify-center border-b border-[#111]`}>Totale</Cell>
        <J>contributi previdenziali e assistenziali obbligatori per legge;</J>
        <K white>€ 6.000</K>
      </Row>
      {table1.map(([a, b, c, d, e, t, mark], i) => {
        const last = i === table1.length - 1;
        const side = [
          "contributi agricoli unificati;",
          "contributi facoltativi versati alla gestione pensionistica obbligatoria;",
          "contributi versati per il riscatto degli anni di laurea;",
          "contributi versati all'assicurazione casalinghe INAIL.",
        ][i];
        return (
          <Row key={a} n={34 + i}>
            <Cell at="col-start-3" className={`${VD} justify-end border-r border-[#111] ${TEAL_L} ${last ? "border-b border-b-[#111]" : ""}`}>{a}</Cell>
            <Cell at="col-start-4" className={`${VD} justify-end border-r border-[#111] ${last ? "border-b border-b-[#111]" : ""}`}>{b}</Cell>
            <Cell at="col-start-5" className={`${VD} ${BLUE} ${RB} ${last ? "border-b-2" : ""}`}>{c}</Cell>
            <Cell at="col-start-6" className={`${VD} ${BLUE} ${RB} ${last ? "border-b-2" : ""}`}>{d}</Cell>
            <Cell at="col-start-7" className={`${VD} ${BLUE} ${RB} ${last ? "border-b-2" : ""}`}>{e}</Cell>
            <Cell at="col-start-8" className={`${VDB} ${RB} justify-center`}>
              {mark && <Corner />}
              {t}
            </Cell>
            {side && <J>{side}</J>}
            {side && <K end={i === 3} />}
          </Row>
        );
      })}
      <Row n={39} h="h-[21px]">
        <Cell at="col-start-5" className="border-r border-[#111]" />
        <Cell at="col-start-6" className="border-r border-[#111]" />
        <Cell at="col-start-7" className="border-r border-[#111]" />
      </Row>
      <Row n={40} />

      <Row n={41} h="h-[21px]">
        <Cell at="col-start-3 col-span-3" className={`${VD} ${HEAD} ${RB} ${TEAL_L} ${TEAL_T}`}>Scaglioni reddito</Cell>
        <Cell at="col-start-6" className={`${HEAD} ${RB} ${TEAL_T}`} />
        <Cell at="col-start-7" className={`${HEAD} ${RB} ${TEAL_T}`} />
        <JH>Deduzioni Fiscali massimo 5164,57 euro</JH>
      </Row>
      <Row n={42}>
        <Cell at="col-start-3" className={`${VD} ${HEAD} ${RB} ${TEAL_L}`}>Da</Cell>
        <Cell at="col-start-4" className={`${VD} ${HEAD} ${RB}`}>a</Cell>
        <Cell at="col-start-5" className={`${VD} ${HEAD} ${RB}`}>Aliquota</Cell>
        <Cell at="col-start-6" className={`${VD} ${HEAD} ${RB}`}>Fascia</Cell>
        <Cell at="col-start-7" className={`${VD} ${HEAD} ${RB}`}>Tassazione Marginale</Cell>
        <J>contributi versati ai fondi pensione;</J>
        <K />
      </Row>
      <Row n={43} h="h-[21px]" active>
        <Cell at="col-start-3" className={`${VD} ${GREEN} justify-end border-r border-[#111] ${TEAL_L}`}>0</Cell>
        <Cell at="col-start-4" className={`${VD} ${GREEN} justify-end border-r border-[#111]`}>15.000</Cell>
        <Cell at="col-start-5" className={`${VD} ${GREEN} justify-center`}>
          26%
          <span className="absolute -inset-y-px -left-px -right-px z-10 border-2 border-[#2f6b4f]" />
          <span className="absolute -bottom-[3px] -right-[3px] z-10 h-[6px] w-[6px] border border-white bg-[#2f6b4f]" />
        </Cell>
        <Cell at="col-start-6" className={`${VD} ${RB} justify-end`}>21.120,50</Cell>
        <Cell at="col-start-7" className={`${VD} ${RB} justify-end`}>5.413</Cell>
        <J>contributi versati per l'assicurazione sulla vita;</J>
        <K />
      </Row>
      <Row n={44} h="h-[37px]" end>
        <Cell at="col-start-3" className={`${VD} ${GREEN} items-end justify-end border-r border-[#111] ${TEAL_L}`}>15.000</Cell>
        <Cell at="col-start-4" className={`${VD} ${GREEN} items-end justify-end border-r border-[#111]`}>28.000</Cell>
        <Cell at="col-start-5" className={`${VD} ${GREEN} ${RB} items-end justify-center`}>31%</Cell>
        <Cell at="col-start-6" className={`${VD} ${RB} items-end justify-end`}>3.879,50</Cell>
        <Cell at="col-start-7" className={`${VD} ${RB} items-end justify-end`}>1.188</Cell>
        <div className={`col-start-10 ${AR} self-end pl-[12px] pr-[2px] leading-[19px]`}>
          contributi familiari a carico che a causa di un basso reddito non possono far valere la deduzione.
        </div>
        <K end />
      </Row>
      {[
        ["28.000", "55.000", "42%"],
        ["55.000", "75.000", "45%"],
        ["75.000", "", "47%"],
      ].map(([a, b, c], i) => {
        const last = i === 2;
        return (
          <Row key={a} n={45 + i} h={last ? "h-[21px]" : "h-[20px]"}>
            <Cell at="col-start-3" className={`${VD} ${GREEN} justify-end border-r border-[#111] ${TEAL_L} ${last ? "border-b border-b-[#1f7a6c]" : ""}`}>{a}</Cell>
            <Cell at="col-start-4" className={`${VD} ${GREEN} justify-end border-r border-[#111] ${last ? "border-b border-b-[#1f7a6c]" : ""}`}>{b}</Cell>
            <Cell at="col-start-5" className={`${VD} ${GREEN} ${RB} justify-center ${last ? "border-b-2" : ""}`}>{c}</Cell>
            <Cell at="col-start-6" className={`${VD} ${RB} justify-end ${last ? "border-b-2" : ""}`}>0,00</Cell>
            <Cell at="col-start-7" className={`${VD} ${RB} justify-end ${last ? "border-b-2" : ""}`}>0</Cell>
            {i === 1 && <JH>Deduzioni Fiscali massimo 1549,37 euro</JH>}
            {last && (
              <Cell at="col-start-10" className={`${AR} pl-[3px]`}>
                contributi versati a favore di collaboratori domestici, quali colf, badanti e babysitter.
              </Cell>
            )}
            {last && <K end />}
          </Row>
        );
      })}
      <Row n={48} h="h-[21px]">
        <Cell at="col-start-5" className={`${CALB} border-r border-[#111]`}>TOTALE</Cell>
        <Cell at="col-start-6" className={`${VDB} justify-end border-r border-[#111]`}>25.000,00</Cell>
        <Cell at="col-start-7" className={`${VDB} justify-end border-r border-[#111]`}>6.601</Cell>
      </Row>
      <Row n={49}>
        <JH>TOTALE ONERI DEDUCIBILI</JH>
        <Cell at="col-start-11" className={`${CALB} justify-end`}>€ 6.000</Cell>
      </Row>
      <Row n={50}>
        <Cell at="col-start-5" className={CALB}>TAX RATE</Cell>
        <Cell at="col-start-7" className={`${CALB} justify-end`}>31,23%</Cell>
      </Row>
      <Row />

      <div className="absolute left-[772px] top-[540px] flex h-[69px] w-[68px] items-center justify-center rounded-full bg-[#ffec17] blur-[1px]">
        <svg width="16" height="16" viewBox="0 0 16 16" fill="#fff" stroke="#000" strokeWidth="1.500">
          <path d="M5 1h6v4h4v6h-4v4H5v-4H1V5h4z" />
        </svg>
      </div>
    </div>
  );
}

function VScroll() {
  return (
    <div className="flex w-[22px] flex-col border-l border-[#8f8f8f] bg-[#e6e6e6] pl-[3px] pr-[3px] pt-[2px]">
      <div className="flex h-[15px] items-center justify-center border border-[#bdbdbd] bg-white">
        <Caret2 up />
      </div>
      <div className="flex flex-1 flex-col bg-[#dbdbdb]">
        <div className="ml-0 mt-[38px] h-[82px] border border-[#c6c6c6] bg-white" />
      </div>
      <div className="flex h-[14px] items-center justify-center border border-[#bdbdbd] bg-white">
        <Caret2 />
      </div>
    </div>
  );
}

const Caret2 = ({ up }: { up?: boolean }) => (
  <svg width="8" height="5" viewBox="0 0 8 5">
    <path d={up ? "M0 5h8L4 0z" : "M0 0h8L4 5z"} fill="#666" />
  </svg>
);

function TabStrip() {
  return (
    <div className={`${UI} flex h-[28px] border-t border-[#9c9c9c] bg-[#e6e6e6]`}>
      <div className="flex w-[100px] items-start gap-[24px] pl-[27px] pt-[9px]">
        <svg width="5" height="8" viewBox="0 0 5 8"><path d="M5 0v8L0 4z" fill="#c6c6c6" /></svg>
        <svg width="5" height="8" viewBox="0 0 5 8"><path d="M0 0v8l5-4z" fill="#c6c6c6" /></svg>
      </div>
      <div className="-mt-px flex h-[25px] w-[120px] items-center justify-center border-b-2 border-[#217346] bg-white pt-[3px] text-[13.300px] font-bold text-[#2a6a4c]">
        Tassazione SNC
      </div>
      <svg className="ml-[33px] mt-[5px]" width="16" height="16" viewBox="0 0 16 16" fill="none" stroke="#777">
        <circle cx="8" cy="8" r="7.300" />
        <path d="M8 4v8M4 8h8" />
      </svg>
      <div className="ml-[883px] mt-[10px] flex h-[10px] flex-col gap-[1px]">
        <span className="h-[2px] w-[2px] bg-[#999]" />
        <span className="h-[2px] w-[2px] bg-[#999]" />
        <span className="h-[2px] w-[2px] bg-[#999]" />
      </div>
      <div className="ml-[17px] mt-[6px] flex h-[15px] w-[13px] items-center justify-center border border-[#bdbdbd] bg-white">
        <svg width="5" height="8" viewBox="0 0 5 8"><path d="M5 0v8L0 4z" fill="#666" /></svg>
      </div>
      <div className="mt-[6px] flex h-[15px] w-[702px] bg-[#d8d8d8]">
        <div className="h-full w-[454px] border border-[#bdbdbd] bg-white" />
      </div>
      <div className="mt-[6px] flex h-[15px] w-[14px] items-center justify-center border border-[#bdbdbd] bg-white">
        <svg width="5" height="8" viewBox="0 0 5 8"><path d="M0 0v8l5-4z" fill="#666" /></svg>
      </div>
    </div>
  );
}

function StatusBar() {
  return (
    <div className={`${UI} flex h-[22px] items-center border-t border-[#d0d0d0] bg-[#f1f1f1] pl-[8px] text-[12px] text-[#444]`}>
      <span>Pronto</span>
      <div className="ml-auto flex h-full items-center pr-[7px]">
        <div className="flex h-full w-[40px] items-center justify-center bg-[#c6c6c6]">
          <svg width="14" height="14" viewBox="0 0 14 14" fill="none" stroke="#555">
            <path d="M.5.5h13v13H.5zM5 .5v13M9.500.5v13M.5 5h13M.5 9.500h13" />
          </svg>
        </div>
        <div className="flex w-[40px] justify-center">
          <svg width="14" height="14" viewBox="0 0 14 14" fill="none" stroke="#555">
            <path d="M.5.5h13v13H.5zM3.500 4h7M3.500 7h7M3.500 10h7" />
          </svg>
        </div>
        <div className="flex w-[40px] justify-center">
          <svg width="14" height="14" viewBox="0 0 14 14" fill="none" stroke="#555">
            <path d="M.5.500h13v13H.5zM.5 9h13M7 .5V9" />
          </svg>
        </div>
        <span className="ml-[6px] h-[1.500px] w-[8px] bg-[#555]" />
        <div className="relative ml-[6px] h-px w-[100px] bg-[#aaa]">
          <span className="absolute -top-[5px] left-[48px] h-[10px] w-[4px] bg-[#666]" />
        </div>
        <span className="relative ml-[5px] h-[8px] w-[8px]">
          <span className="absolute left-0 top-[3.500px] h-px w-[8px] bg-[#555]" />
          <span className="absolute left-[3.500px] top-0 h-[8px] w-px bg-[#555]" />
        </span>
        <span className="ml-[11px]">100%</span>
      </div>
    </div>
  );
}

export default function App() {
  return (
    <div className="relative flex h-[1080px] w-[1920px] flex-col overflow-hidden bg-black">
      <TitleBar />
      <TabBar />
      <Ribbon />
      <FormulaBar />
      <div className="flex h-[727px] overflow-hidden">
        <Sheet />
        <VScroll />
      </div>
      <TabStrip />
      <StatusBar />
      <div className="flex h-[5px] bg-[#d3d3d3]">
        <div className="ml-[49px] w-[341px] bg-white" />
      </div>

      <div className="absolute left-[1891px] top-[503px] flex h-[34px] w-[34px] items-center justify-center rounded-full bg-[#0f70e0] shadow">
        <svg width="22" height="20" viewBox="0 0 22 20" fill="#dff0ff">
          <path d="M6 0l5 3.500L6 7 1 3.500zM16 0l5 3.500L16 7l-5-3.500zM6 7l5 3.500L6 14l-5-3.500zM16 7l5 3.500L16 14l-5-3.500zM11 11.500l5 3.500-5 3.500L6 15z" />
        </svg>
      </div>
    </div>
  );
}
